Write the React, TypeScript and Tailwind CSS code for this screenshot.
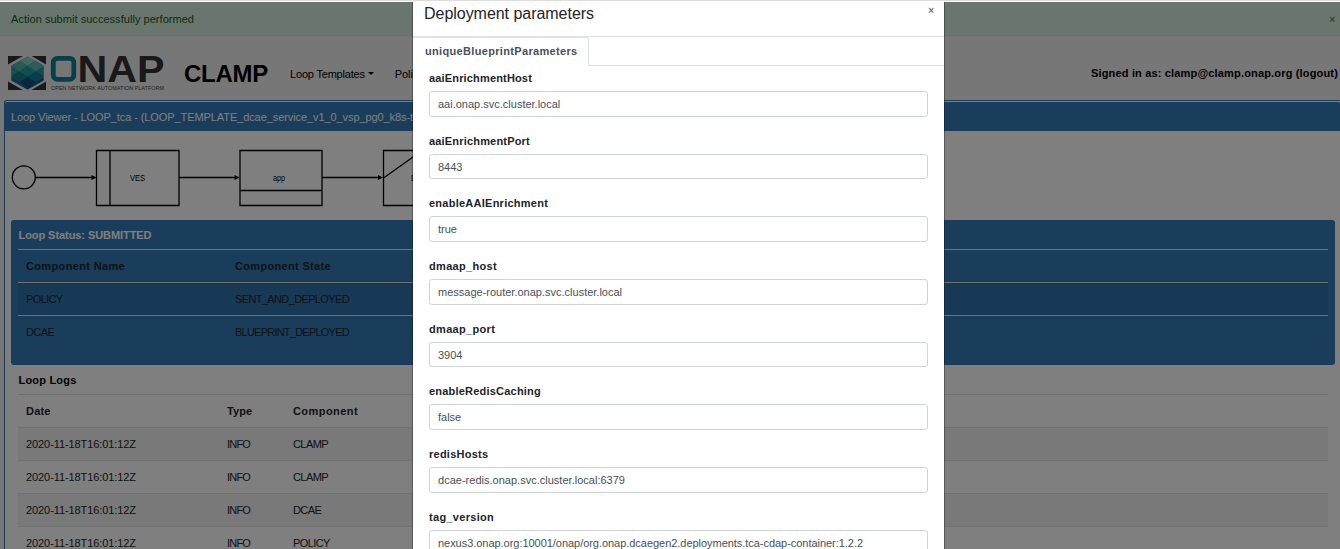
import React from "react";

const COMPONENTS = [
  { name: "POLICY", state: "SENT_AND_DEPLOYED", stateClass: "tracking-[-0.63px]", rowClass: "bg-black/5" },
  { name: "DCAE", state: "BLUEPRINT_DEPLOYED", stateClass: "tracking-[-0.77px]", rowClass: "" },
];

const LOGS = [
  { component: "CLAMP", rowClass: "bg-black/5" },
  { component: "CLAMP", rowClass: "" },
  { component: "DCAE", rowClass: "bg-black/5" },
  { component: "POLICY", rowClass: "" },
];

const FIELDS = [
  { label: "aaiEnrichmentHost", labelClass: "tracking-[0.16px]", value: "aai.onap.svc.cluster.local", valueClass: "" },
  { label: "aaiEnrichmentPort", labelClass: "tracking-[0.18px]", value: "8443", valueClass: "" },
  { label: "enableAAIEnrichment", labelClass: "tracking-[0.25px]", value: "true", valueClass: "" },
  { label: "dmaap_host", labelClass: "tracking-[0.32px]", value: "message-router.onap.svc.cluster.local", valueClass: "" },
  { label: "dmaap_port", labelClass: "tracking-[0.32px]", value: "3904", valueClass: "" },
  { label: "enableRedisCaching", labelClass: "tracking-[0.21px]", value: "false", valueClass: "" },
  { label: "redisHosts", labelClass: "tracking-[0.25px]", value: "dcae-redis.onap.svc.cluster.local:6379", valueClass: "tracking-[0.013px]" },
  {
    label: "tag_version",
    labelClass: "tracking-[0.3px]",
    value: "nexus3.onap.org:10001/onap/org.onap.dcaegen2.deployments.tca-cdap-container:1.2.2",
    valueClass: "tracking-[-0.038px]",
  },
];

function Logo() {
  return (
    <svg width="160" height="48" viewBox="0 -10 160 48" className="shrink-0">
      <defs>
        <clipPath id="hex">
          <path d="M19.500 1.500 35.500 10.500V25.500L19.500 34.500 3.500 25.500V10.500z" />
        </clipPath>
      </defs>
      <path d="M0 1h15L0 9.500zM23.500 1H38v8.500zM0 26.500l15 8.500H0zM38 26.500V35H23.500z" fill="#333" />
      <g clipPath="url(#hex)">
        <rect width="40" height="38" fill="#16759a" />
        <path d="M19.500 0 28 5.500 19.500 11 11 5.500z" fill="#8bcdc4" />
        <path d="M11 5.500 19.500 11 11 16.500 2.500 11z" fill="#55b5a9" />
        <path d="M28 5.500 36.500 11 28 16.500 19.500 11z" fill="#5cbab2" />
        <path d="M19.500 11 28 16.500 19.500 22 11 16.500z" fill="#229f9b" />
        <path d="M2.500 11 11 16.500 2.500 22z" fill="#28a092" />
        <path d="M36.500 11v11L28 16.500z" fill="#23999a" />
        <path d="M11 16.500 19.500 22 11 27.500 2.500 22z" fill="#147e91" />
        <path d="M28 16.500 36.500 22 28 27.500 19.500 22z" fill="#117c96" />
        <path d="M19.500 22 28 27.500 19.500 33 11 27.500z" fill="#174c89" />
        <path d="M2.500 22 11 27.500 19.500 33v4L2.500 30z" fill="#17669a" />
        <path d="M36.500 22 28 27.500 19.500 33v4l17-7z" fill="#15578d" />
      </g>
      <rect x="45.300" y="3.300" width="20.500" height="21" rx="4" fill="none" stroke="#118095" strokeWidth="4.800" />
      <text
        x="69.500"
        y="26.700"
        fill="#333"
        textLength="87"
        lengthAdjust="spacingAndGlyphs"
        className="font-['Liberation_Sans'] text-[36.5px] font-bold"
      >
        NAP
      </text>
      <text
        x="43"
        y="34.600"
        fill="#444"
        textLength="113"
        lengthAdjust="spacingAndGlyphs"
        className="font-['Liberation_Sans'] text-[5.6px]"
      >
        OPEN NETWORK AUTOMATION PLATFORM
      </text>
    </svg>
  );
}

function LoopDiagram() {
  return (
    <svg
      width="440"
      height="89"
      viewBox="0 131 440 89"
      className="-ml-[5px] block shrink-0"
      fill="none"
      stroke="#000"
      strokeWidth="1.3"
    >
      <circle cx="23.800" cy="177.300" r="11.500" />
      <path d="M35.500 177.500H93M179 177.500h57M322 177.500h57" />
      <path d="M91.500 175v5l5-2.500zM234.500 175v5l5-2.500zM378 175v5l5-2.500z" fill="#000" stroke="none" />
      <path d="M96.500 150.500h82.500v55H96.500zM110 150.500v55" />
      <path d="M240 150.500h82v55h-82zM240 190.500h82" />
      <path d="M440 150.500h-56.500v55H440M383.500 178l38-27" />
      <g fill="#000" stroke="none" className="font-['Liberation_Sans'] text-[8.6px]">
        <text x="130" y="181" textLength="15" lengthAdjust="spacingAndGlyphs">VES</text>
        <text x="273" y="181" textLength="12" lengthAdjust="spacingAndGlyphs">app</text>
        <text x="411" y="181">D</text>
      </g>
    </svg>
  );
}

function LoopPage() {
  return (
    <div className="flex h-full flex-col">
      <div className="flex h-[34px] shrink-0 items-center justify-between border-b border-[#c3e6cb] bg-[#d4edda] pr-[5px] pl-[11px] text-[#155724]">
        <span className="tracking-[0.04px]">Action submit successfully performed</span>
        <span className="pt-[3px] text-[10px] font-bold opacity-60">×</span>
      </div>
      <div className="flex h-16 shrink-0 items-center bg-[#eee] pr-[2px] pl-2">
        <div className="mt-px flex">
          <Logo />
        </div>
        <span className="mt-3 ml-4 text-[24px] leading-7 font-bold tracking-[-0.26px] text-black">CLAMP</span>
        <span className="mt-[11px] ml-[22px] tracking-[-0.19px] text-black">Loop Templates</span>
        <span className="mt-[11px] ml-[3px] border-x-[3px] border-t-[3px] border-x-transparent border-t-black" />
        <span className="mt-[11px] ml-[21px] tracking-[-0.1px] text-black">Polic</span>
        <span className="mt-[10px] ml-auto font-bold tracking-[0.165px] text-black">
          Signed in as: clamp@clamp.onap.org (logout)
        </span>
      </div>
      <div className="flex min-h-0 grow bg-[#eee] pl-1">
        <div className="flex grow flex-col rounded-tl-[3px] border-t border-l border-[#337ab7] bg-white pt-px">
          <div className="flex h-[29px] shrink-0 items-center rounded-t-[2px] bg-[#337ab7] pt-px pl-[6px] tracking-[-0.085px] text-white">
            Loop Viewer - LOOP_tca - (LOOP_TEMPLATE_dcae_service_v1_0_vsp_pg0_k8s-t
          </div>
          <LoopDiagram />
          <div className="mr-[5px] ml-[6px] h-[145px] shrink-0 rounded-[3px] bg-[#337ab7] px-[7px] text-[#212529]">
            <div className="flex h-[29px] items-center pl-[0.5px] font-bold tracking-[-0.065px] text-white">
              Loop Status: SUBMITTED
            </div>
            <div className="flex h-[33px] items-center border-t border-[#dee2e6] pl-2 font-bold">
              <span className="w-[209px] tracking-[0.35px]">Component Name</span>
              <span className="tracking-[0.33px]">Component State</span>
            </div>
            {COMPONENTS.map((c) => (
              <div key={c.name} className={`flex h-[33px] items-center border-t border-[#dee2e6] pl-2 ${c.rowClass}`}>
                <span className="w-[209px] tracking-[-0.58px]">{c.name}</span>
                <span className={c.stateClass}>{c.state}</span>
              </div>
            ))}
          </div>
          <div className="mr-3 ml-[13px] text-[#212529]">
            <div className="flex h-[29px] items-center pl-[0.5px] font-bold tracking-[0.2px] text-black">Loop Logs</div>
            <div className="flex h-[33px] items-center border-t border-[#dee2e6] pl-2 font-bold">
              <span className="w-[201px] tracking-[0.2px]">Date</span>
              <span className="w-[66px] tracking-[0.1px]">Type</span>
              <span className="tracking-[0.43px]">Component</span>
            </div>
            {LOGS.map((l, i) => (
              <div key={i} className={`flex h-[33px] items-center border-t border-[#dee2e6] pl-2 ${l.rowClass}`}>
                <span className="w-[201px] tracking-[-0.085px]">2020-11-18T16:01:12Z</span>
                <span className="w-[66px] tracking-[-0.8px]">INFO</span>
                <span className="tracking-[-0.58px]">{l.component}</span>
              </div>
            ))}
          </div>
        </div>
      </div>
    </div>
  );
}

function DeploymentModal() {
  return (
    <div className="ml-[412px] flex h-full w-[533px] flex-col border-x border-black/30 bg-white bg-clip-padding text-[#212529]">
      <div className="flex h-[35px] shrink-0 justify-between border-b border-[#dee2e6] pr-[10px] pl-[11px]">
        <span className="text-[16px] leading-[23px] tracking-[-0.035px]">Deployment parameters</span>
        <span className="pt-[2px] text-[10px] leading-[14px] font-bold text-[#777]">×</span>
      </div>
      <div className="flex h-[29px] shrink-0">
        <div className="flex w-[176px] items-center rounded-tr-[3px] border-t border-r border-[#dee2e6] pb-[2px] pl-3 font-bold tracking-[0.33px] text-[#495057]">
          uniqueBlueprintParameters
        </div>
        <div className="grow border-b border-[#dee2e6]" />
      </div>
      <div className="px-4 pt-[4px]">
        {FIELDS.map((f) => (
          <div key={f.label} className="h-[62.7px]">
            <div className={`h-[21px] leading-[17px] font-bold ${f.labelClass}`}>{f.label}</div>
            <div
              className={`flex h-[25.7px] items-center rounded-[3px] border border-[#ced4da] pl-2 whitespace-nowrap text-[#495057] ${f.valueClass}`}
            >
              {f.value}
            </div>
          </div>
        ))}
      </div>
    </div>
  );
}

export default function App() {
  return (
    <div className="flex h-[549px] w-[1340px] flex-col overflow-hidden border-t border-[#ddd] bg-white pt-px font-['Liberation_Sans',Arial,sans-serif] text-[11px] leading-4">
      <div className="relative min-h-0 grow overflow-hidden">
        <LoopPage />
        <div className="absolute inset-0 bg-black/50">
          <DeploymentModal />
        </div>
      </div>
    </div>
  );
}
